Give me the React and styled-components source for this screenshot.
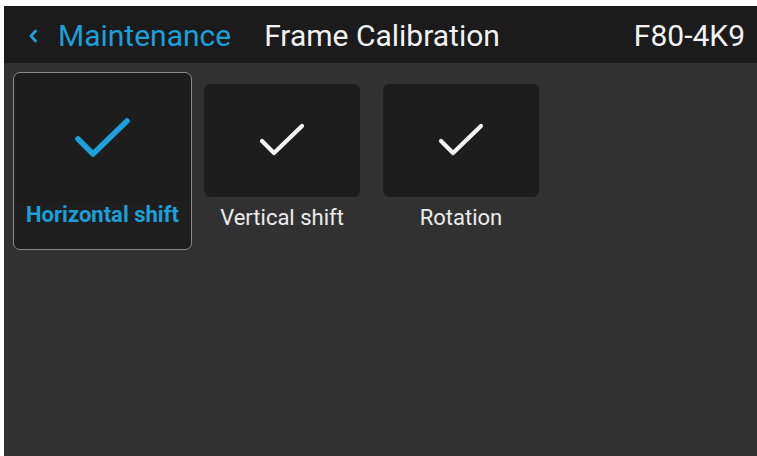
import React from "react";
import styled, { createGlobalStyle } from "styled-components";

const GlobalStyle = createGlobalStyle`
  html, body {
    margin: 0;
    padding: 0;
    background: #ffffff;
  }
  body {
    font-family: Roboto, "Liberation Sans", sans-serif;
  }
`;

const Screen = styled.div`
  width: 757px;
  height: 456px;
  box-sizing: border-box;
  padding: 6px 0 0 4px;
  background: #ffffff;
  display: flex;
  flex-direction: column;
`;

const Panel = styled.div`
  flex: 1;
  display: flex;
  flex-direction: column;
  background: #313131;
  overflow: hidden;
`;

const Header = styled.header`
  height: 57px;
  box-sizing: border-box;
  display: flex;
  align-items: center;
  background: #1b1b1b;
  padding: 2px 12px 0 24px;
`;

const Back = styled.div`
  display: flex;
  align-items: center;
  gap: 20px;
  color: #1d9fd9;
  font-size: 30px;
`;

const Title = styled.div`
  margin-left: 33px;
  color: #f2f2f2;
  font-size: 30px;
`;

const Model = styled.div`
  margin-left: auto;
  color: #f2f2f2;
  font-size: 30px;
`;

const Row = styled.div`
  display: flex;
  align-items: center;
  gap: 23px;
  padding: 9px 0 0 20px;
`;

const Card = styled.div`
  box-sizing: border-box;
  display: flex;
  flex-direction: column;
  align-items: center;
  width: ${(p) => (p.$selected ? 179 : 156)}px;
  height: ${(p) => (p.$selected ? 178 : 155)}px;
  margin: ${(p) => (p.$selected ? "0 -11px" : "0")};
  border-radius: 7px;
  border: ${(p) => (p.$selected ? "1.5px solid #8a8a8a" : "none")};
  background: ${(p) => (p.$selected ? "#1e1e1e" : "transparent")};
  padding: ${(p) => (p.$selected ? "1px 2px" : "0")};
`;

const Tile = styled.div`
  width: 100%;
  height: ${(p) => (p.$selected ? 128 : 113)}px;
  border-radius: 6px;
  background: #1d1d1d;
  display: flex;
  align-items: center;
  justify-content: center;
`;

const Label = styled.div`
  margin-top: ${(p) => (p.$selected ? 0 : 8)}px;
  font-size: 22px;
  line-height: 26px;
  font-weight: ${(p) => (p.$selected ? 700 : 400)};
  color: ${(p) => (p.$selected ? "#1d9fd9" : "#ececec")};
  white-space: nowrap;
`;

const Chevron = () => (
  <svg width="10" height="14" viewBox="0 0 10 14">
    <path d="M7.5 2 L3 7 L7.5 12" fill="none" stroke="#1d9fd9" strokeWidth="2.8" strokeLinecap="round" strokeLinejoin="round" />
  </svg>
);

const Check = ({ selected }) =>
  selected ? (
    <svg width="60" height="46" viewBox="0 0 60 46">
      <path d="M5 24 L20 39 L54 6" fill="none" stroke="#1d9fd9" strokeWidth="5.5" strokeLinecap="round" strokeLinejoin="round" />
    </svg>
  ) : (
    <svg width="48" height="38" viewBox="0 0 48 38">
      <path d="M4 20 L16 32 L44 5" fill="none" stroke="#f5f5f5" strokeWidth="4.2" strokeLinecap="round" strokeLinejoin="round" />
    </svg>
  );

const items = [
  { label: "Horizontal shift", selected: true },
  { label: "Vertical shift" },
  { label: "Rotation" },
];

export default function App() {
  return (
    <>
      <GlobalStyle />
      <Screen>
        <Panel>
          <Header>
            <Back>
              <Chevron />
              <span>Maintenance</span>
            </Back>
            <Title>Frame Calibration</Title>
            <Model>F80-4K9</Model>
          </Header>
          <Row>
            {items.map((it) => (
              <Card key={it.label} $selected={it.selected}>
                <Tile $selected={it.selected}>
                  <Check selected={it.selected} />
                </Tile>
                <Label $selected={it.selected}>{it.label}</Label>
              </Card>
            ))}
          </Row>
        </Panel>
      </Screen>
    </>
  );
}
